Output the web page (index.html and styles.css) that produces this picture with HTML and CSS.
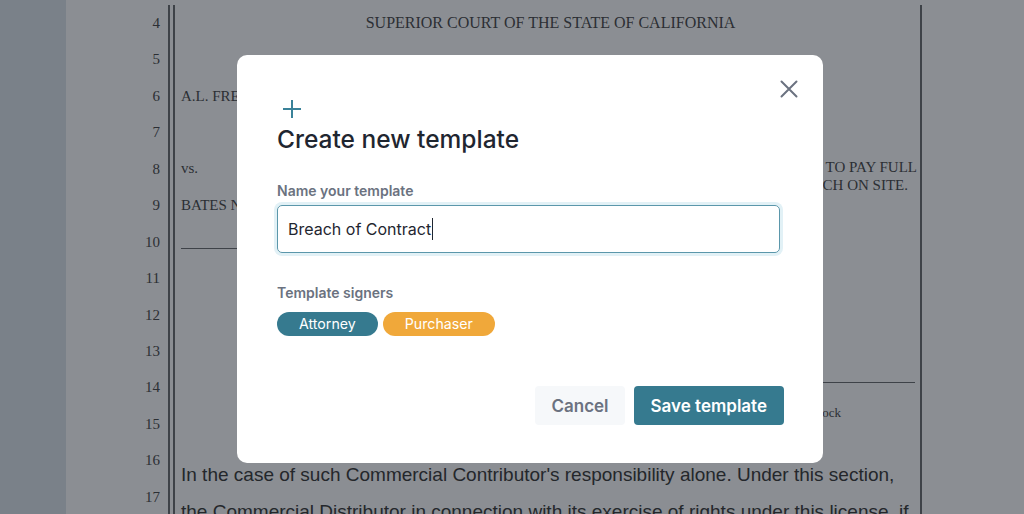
FILE: index.html
```html
<!DOCTYPE html>
<html lang="en">

<head>
    <meta charset="UTF-8">
    <meta name="viewport" content="width=device-width, initial-scale=1.0">
    <title>Create new template</title>
    <link rel="stylesheet" href="styles.css">
</head>
<body>
    <div class="screen">
        <div class="strip"></div>
        <div class="page">
            <div class="numbers">
                <span>4</span><span>5</span><span>6</span><span>7</span><span>8</span>
                <span>9</span><span>10</span><span>11</span><span>12</span><span>13</span>
                <span>14</span><span>15</span><span>16</span><span>17</span>
            </div>
            <div class="rule"></div>
            <div class="sheet">
                <div class="row caption">SUPERIOR COURT OF THE STATE OF CALIFORNIA</div>
                <div class="row"></div>
                <div class="row">A.L. FREEMAN,</div>
                <div class="row"></div>
                <div class="row">
                    <span>vs.</span>
                    <div class="claim">
                        <span>AGREEMENT TO PAY FULL</span>
                        <span class="second">PRICE OF LUNCH ON SITE.</span>
                    </div>
                </div>
                <div class="row">BATES NURSERY, INC.,</div>
                <div class="row"><div class="underline"></div></div>
                <div class="row"></div>
                <div class="row"></div>
                <div class="row"></div>
                <div class="row"><div class="signline"></div></div>
                <div class="row"><span class="note">Block</span></div>
                <p class="para">
                    <span>In the case of such Commercial Contributor's responsibility alone. Under this section,</span>
                    <span>the Commercial Distributor in connection with its exercise of rights under this license, if</span>
                </p>
            </div>
        </div>
    </div>

    <div class="modal">
        <button class="close" aria-label="Close">
            <svg width="18" height="18" viewBox="0 0 18 18" fill="none" stroke="#6b7280" stroke-width="2" stroke-linecap="round">
                <path d="M1.5 1.5L16.5 16.5M16.5 1.5L1.5 16.5"/>
            </svg>
        </button>
        <svg class="plus" width="18" height="18" viewBox="0 0 18 18" fill="none" stroke="#3a8299" stroke-width="2">
            <path d="M9 0V18M0 9H18"/>
        </svg>
        <h2>Create new template</h2>
        <label for="name">Name your template</label>
        <div class="field" id="name">Breach of Contract<span class="caret"></span></div>
        <p class="label">Template signers</p>
        <div class="chips">
            <span class="chip attorney">Attorney</span>
            <span class="chip purchaser">Purchaser</span>
        </div>
        <div class="actions">
            <button class="cancel">Cancel</button>
            <button class="save">Save template</button>
        </div>
    </div>
</body>

</html>
```

FILE: styles.css
```css
* {
    box-sizing: border-box;
}

body {
    margin: 0;
    height: 514px;
    overflow: hidden;
    background-color: #7a8189;
    font-family: "Liberation Serif", serif;
}

.screen {
    display: flex;
    height: 100vh;
}

.strip {
    width: 66px;
    flex: none;
}

.page {
    flex: 1;
    display: flex;
    padding-top: 5px;
    background-color: #8b8e93;
    color: #2c2f34;
}

.numbers {
    width: 94px;
    flex: none;
    text-align: right;
    font-size: 15px;
}

.numbers span {
    display: block;
    height: 36.45px;
    line-height: 36.45px;
}

.rule {
    width: 7px;
    flex: none;
    margin-left: 8px;
    border-left: 2px solid #3e4248;
    border-right: 2px solid #3e4248;
}

.sheet {
    width: 747px;
    flex: none;
    padding-left: 6px;
    border-right: 2px solid #3e4248;
    font-size: 15px;
    overflow: hidden;
}

.row {
    display: flex;
    align-items: center;
    height: 36.45px;
}

.caption {
    justify-content: center;
    font-size: 16px;
}

.claim {
    display: flex;
    flex-direction: column;
    align-items: flex-end;
    margin-left: auto;
    margin-right: 3px;
    padding-top: 15px;
    line-height: 18px;
}

.claim .second {
    margin-right: 9px;
}

.underline {
    align-self: flex-start;
    width: 380px;
    height: 25px;
    border-bottom: 1px solid #3e4248;
}

.signline {
    align-self: flex-start;
    width: 360px;
    height: 14px;
    margin-left: auto;
    margin-right: 5px;
    border-bottom: 1.5px solid #3e4248;
}

.note {
    align-self: flex-start;
    margin-left: auto;
    margin-right: 79px;
    font-size: 13px;
    line-height: 13px;
}

.para {
    margin: 15px 0 0;
    font-family: "Liberation Sans", sans-serif;
    font-size: 19px;
    line-height: 36.45px;
    color: #24272b;
    white-space: nowrap;
}

.para span {
    display: block;
}

/* dialog */

.modal {
    position: absolute;
    left: 237px;
    top: 55px;
    width: 586px;
    height: 408px;
    padding: 45px 39px 38px 40px;
    background-color: #fff;
    border-radius: 10px;
    font-family: "Inter", "Noto Sans", sans-serif;
    display: flex;
    flex-direction: column;
}

.close {
    position: absolute;
    top: 25px;
    right: 25px;
    padding: 0;
    border: none;
    background: none;
    cursor: pointer;
}

.close svg {
    display: block;
}

.plus {
    display: block;
    margin-left: 6px;
}

.modal h2 {
    margin: 7px 0 0;
    font-size: 24.5px;
    line-height: 29px;
    font-weight: 500;
    color: #1f2630;
}

.modal label,
.label {
    margin: 0;
    font-size: 14px;
    line-height: 17px;
    font-weight: 600;
    color: #6b7280;
}

.modal label {
    margin-top: 28px;
}

.field {
    display: flex;
    align-items: center;
    height: 48px;
    margin-top: 6px;
    margin-right: 4px;
    padding: 0 10px;
    border: 1.5px solid #5b97ab;
    border-radius: 5px;
    box-shadow: 0 0 0 3px #e2f1f6;
    font-size: 16px;
    color: #1f2630;
}

.caret {
    width: 1px;
    height: 22px;
    margin-left: 1px;
    background-color: #1f2630;
}

.label {
    margin-top: 31px;
}

.chips {
    display: flex;
    gap: 5px;
    margin-top: 11px;
}

.chip {
    height: 24px;
    padding: 0 22px;
    border-radius: 12px;
    font-size: 14.2px;
    line-height: 24px;
    color: #fff;
}

.attorney {
    background-color: #367a8f;
}

.purchaser {
    background-color: #f0a83a;
}

.actions {
    display: flex;
    justify-content: flex-end;
    gap: 9px;
    margin-top: auto;
}

.actions button {
    height: 39px;
    padding: 0 16px;
    border: none;
    border-radius: 4px;
    font-family: inherit;
    font-size: 17px;
    font-weight: 600;
    cursor: pointer;
}

.actions .save {
    padding: 0 17px;
}

.cancel {
    background-color: #f6f8fa;
    color: #6b7280;
}

.save {
    background-color: #367a8f;
    color: #fff;
}
```
